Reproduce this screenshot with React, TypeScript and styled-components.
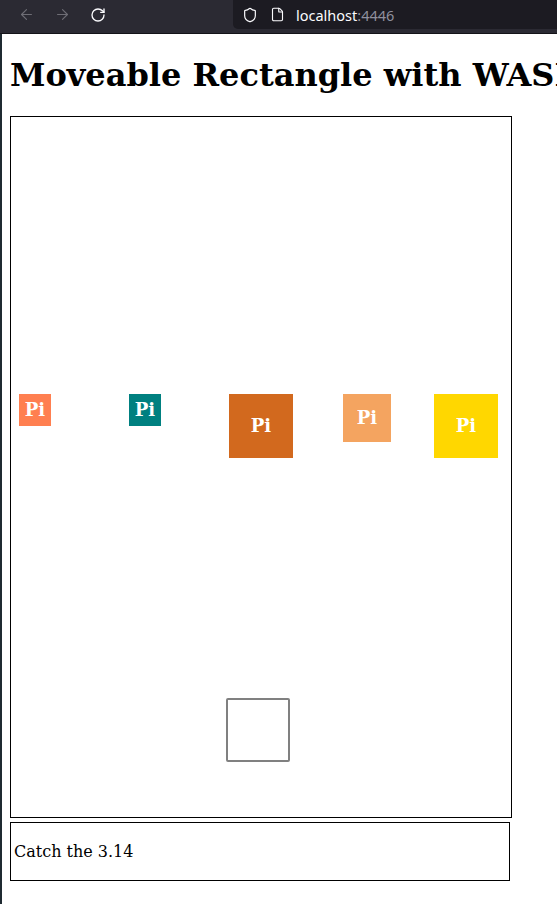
import React from "react";
import styled, { createGlobalStyle } from "styled-components";
import { ArrowLeft, ArrowRight, RotateCw, Shield, File } from "lucide-react";

interface PiItem {
  x: number;
  y: number;
  size: number;
  color: string;
}

const pies: Array<PiItem> = [
  { x: 8, y: 277, size: 32, color: "#ff7f50" },
  { x: 118, y: 277, size: 32, color: "#008080" },
  { x: 218, y: 277, size: 64, color: "#d2691e" },
  { x: 332, y: 277, size: 48, color: "#f4a460" },
  { x: 423, y: 277, size: 64, color: "#ffd700" },
];

const GlobalStyle = createGlobalStyle`
  html, body {
    margin: 0;
    padding: 0;
    background: #ffffff;
  }
  body {
    overflow: hidden;
  }
`;

const Window = styled.div`
  width: 557px;
  height: 904px;
  display: flex;
  flex-direction: column;
  overflow: hidden;
`;

const Toolbar = styled.div`
  box-sizing: border-box;
  height: 34px;
  background-color: #2b2a33;
  border-bottom: 1px solid #141318;
  display: flex;
  flex-direction: row;
  align-items: flex-start;
  flex-shrink: 0;
`;

const NavButton = styled.div<{ $active?: boolean }>`
  width: 36px;
  height: 29px;
  display: flex;
  align-items: center;
  justify-content: center;
  color: ${(p) => (p.$active ? "#fbfbfe" : "#6e6d75")};
`;

const NavGroup = styled.div`
  display: flex;
  flex-direction: row;
  padding-left: 8px;
  width: 225px;
`;

const UrlField = styled.div`
  flex: 1;
  height: 29px;
  background-color: #1c1b22;
  border-radius: 0 0 0 5px;
  display: flex;
  align-items: center;
  padding-left: 9px;
  gap: 12px;
  color: #fbfbfe;
`;

const UrlText = styled.span`
  font-family: "Noto Sans", "DejaVu Sans", sans-serif;
  font-size: 14.5px;
  color: #fbfbfe;
  margin-left: -1px;
  span {
    color: #8f8f9d;
  }
`;

const Body = styled.div`
  flex: 1;
  display: flex;
  flex-direction: row;
  min-height: 0;
`;

const EdgeStrip = styled.div`
  width: 2px;
  background-color: #1f2a31;
  flex-shrink: 0;
`;

const Page = styled.div`
  flex: 1;
  overflow: hidden;
  padding: 0 8px;
  font-family: "DejaVu Serif", serif;
`;

const Title = styled.h1`
  margin: 21px 0 21px 0;
  font-size: 32px;
  line-height: 40px;
  font-weight: bold;
  white-space: nowrap;
  color: #000;
`;

const GameArea = styled.div`
  position: relative;
  width: 500px;
  height: 700px;
  border: 1px solid #000;
`;

const PiBlock = styled.div<{ $size: number; $color: string }>`
  position: absolute;
  width: ${(p) => p.$size}px;
  height: ${(p) => p.$size}px;
  background-color: ${(p) => p.$color};
  color: #ffffff;
  font-family: "DejaVu Serif", serif;
  font-weight: bold;
  font-size: 18px;
  display: flex;
  align-items: center;
  justify-content: center;
  padding-bottom: 2px;
  box-sizing: border-box;
`;

const Player = styled.div`
  position: absolute;
  left: 215px;
  top: 581px;
  width: 64px;
  height: 64px;
  box-sizing: border-box;
  border: 2px solid #808080;
  border-radius: 2px;
`;

const Status = styled.div`
  box-sizing: border-box;
  margin-top: 4px;
  width: 500px;
  height: 59px;
  border: 1px solid #000;
  padding: 0 3px;
  display: flex;
  align-items: center;
  font-size: 16px;
  color: #000;
`;

function App() {
  return (
    <Window>
      <GlobalStyle />
      <Toolbar>
        <NavGroup>
          <NavButton>
            <ArrowLeft size={17} strokeWidth={1.6} />
          </NavButton>
          <NavButton>
            <ArrowRight size={17} strokeWidth={1.6} />
          </NavButton>
          <NavButton $active>
            <RotateCw size={16} strokeWidth={2} />
          </NavButton>
        </NavGroup>
        <UrlField>
          <Shield size={16} strokeWidth={1.8} />
          <File size={15} strokeWidth={1.8} />
          <UrlText>
            localhost<span>:4446</span>
          </UrlText>
        </UrlField>
      </Toolbar>
      <Body>
        <EdgeStrip />
        <Page>
          <Title>Moveable Rectangle with WASD</Title>
          <GameArea>
            {pies.map((item, i) => (
              <PiBlock
                key={i}
                $size={item.size}
                $color={item.color}
                style={{ left: item.x, top: item.y }}
              >
                Pi
              </PiBlock>
            ))}
            <Player />
          </GameArea>
          <Status>Catch the 3.14</Status>
        </Page>
      </Body>
    </Window>
  );
}

export default App;
